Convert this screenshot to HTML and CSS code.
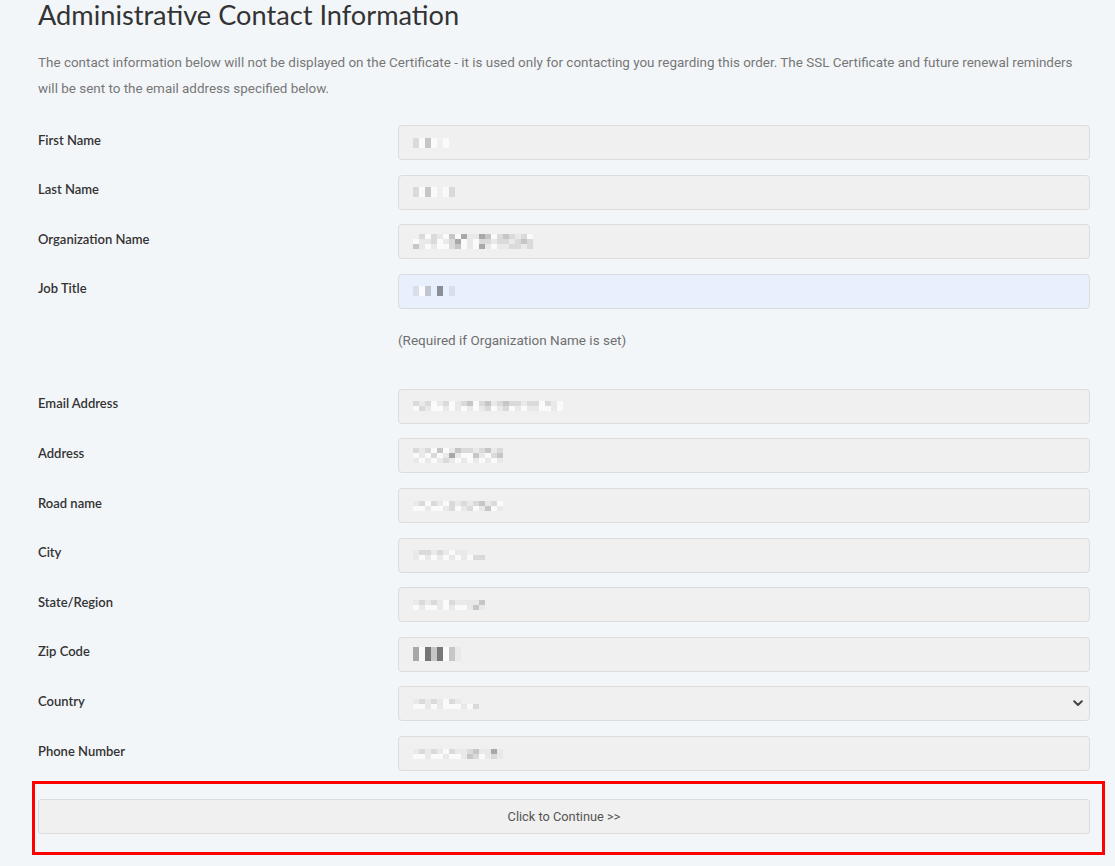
FILE: index.html
```html
<!DOCTYPE html>
<html lang="en">
<head>
<meta charset="utf-8">
<title>Administrative Contact Information</title>
<link rel="stylesheet" href="styles.css">
</head>
<body>
<div class="page">
  <h1 class="title">Administrative Contact Information</h1>
  <p class="intro">The contact information below will not be displayed on the Certificate - it is used only for contacting you regarding this order. The SSL Certificate and future renewal reminders will be sent to the email address specified below.</p>

  <form class="form">
    <div class="row">
      <label class="label">First Name</label>
      <div class="field">
        <div class="input"><span class="pix"><span class="r"><i class="a"></i><i class="w"></i><i class="b"></i><i class="w"></i><i class="n"></i><i class="w"></i></span><span class="r"><i class="a"></i><i class="w"></i><i class="b"></i><i class="w"></i><i class="n"></i><i class="w"></i></span></span></div>
      </div>
    </div>
    <div class="row">
      <label class="label">Last Name</label>
      <div class="field">
        <div class="input"><span class="pix"><span class="r"><i class="a"></i><i class="w"></i><i class="b"></i><i class="w"></i><i class="n"></i><i class="w"></i><i class="a"></i></span><span class="r"><i class="a"></i><i class="w"></i><i class="b"></i><i class="w"></i><i class="n"></i><i class="w"></i><i class="a"></i></span></span></div>
      </div>
    </div>
    <div class="row">
      <label class="label">Organization Name</label>
      <div class="field">
        <div class="input"><span class="pix"><span class="r"><i class="n"></i><i class="a"></i><i class="w"></i><i class="a"></i><i class="l"></i><i class="w"></i><i class="b"></i><i class="w"></i><i class="c"></i><i class="l"></i><i class="l"></i><i class="c"></i><i class="b"></i><i class="w"></i><i class="a"></i><i class="b"></i><i class="a"></i><i class="l"></i><i class="a"></i><i class="w"></i></span><span class="r"><i class="w"></i><i class="l"></i><i class="l"></i><i class="a"></i><i class="w"></i><i class="l"></i><i class="a"></i><i class="c"></i><i class="w"></i><i class="l"></i><i class="w"></i><i class="a"></i><i class="a"></i><i class="l"></i><i class="a"></i><i class="a"></i><i class="l"></i><i class="a"></i><i class="b"></i><i class="a"></i></span><span class="r"><i class="b"></i><i class="l"></i><i class="w"></i><i class="l"></i><i class="w"></i><i class="w"></i><i class="a"></i><i class="b"></i><i class="w"></i><i class="l"></i><i class="w"></i><i class="c"></i><i class="l"></i><i class="w"></i><i class="l"></i><i class="l"></i><i class="a"></i><i class="a"></i><i class="l"></i><i class="a"></i></span></span></div>
      </div>
    </div>
    <div class="row">
      <label class="label">Job Title</label>
      <div class="field">
        <div class="input autofill"><span class="pix"><span class="r"><i class="ba"></i><i class="w"></i><i class="bb"></i><i class="n"></i><i class="bc"></i><i class="n"></i><i class="ba"></i></span><span class="r"><i class="ba"></i><i class="w"></i><i class="bb"></i><i class="n"></i><i class="bc"></i><i class="n"></i><i class="ba"></i></span></span></div>
        <p class="help">(Required if Organization Name is set)</p>
      </div>
    </div>
    <div class="row">
      <label class="label">Email Address</label>
      <div class="field">
        <div class="input"><span class="pix"><span class="r"><i class="a"></i><i class="l"></i><i class="a"></i><i class="w"></i><i class="l"></i><i class="a"></i><i class="w"></i><i class="l"></i><i class="a"></i><i class="b"></i><i class="w"></i><i class="a"></i><i class="b"></i><i class="l"></i><i class="a"></i><i class="b"></i><i class="a"></i><i class="a"></i><i class="l"></i><i class="a"></i><i class="a"></i><i class="w"></i><i class="a"></i><i class="l"></i><i class="w"></i></span><span class="r"><i class="w"></i><i class="a"></i><i class="l"></i><i class="w"></i><i class="w"></i><i class="l"></i><i class="w"></i><i class="l"></i><i class="w"></i><i class="l"></i><i class="w"></i><i class="l"></i><i class="a"></i><i class="w"></i><i class="l"></i><i class="a"></i><i class="w"></i><i class="l"></i><i class="w"></i><i class="l"></i><i class="l"></i><i class="w"></i><i class="w"></i><i class="l"></i><i class="w"></i></span></span></div>
      </div>
    </div>
    <div class="row">
      <label class="label">Address</label>
      <div class="field">
        <div class="input"><span class="pix"><span class="r"><i class="a"></i><i class="l"></i><i class="a"></i><i class="w"></i><i class="b"></i><i class="w"></i><i class="l"></i><i class="b"></i><i class="a"></i><i class="a"></i><i class="l"></i><i class="a"></i><i class="b"></i><i class="l"></i><i class="a"></i></span><span class="r"><i class="w"></i><i class="l"></i><i class="w"></i><i class="a"></i><i class="w"></i><i class="l"></i><i class="c"></i><i class="l"></i><i class="w"></i><i class="w"></i><i class="b"></i><i class="l"></i><i class="w"></i><i class="a"></i><i class="b"></i></span><span class="r"><i class="l"></i><i class="w"></i><i class="l"></i><i class="w"></i><i class="l"></i><i class="a"></i><i class="l"></i><i class="w"></i><i class="l"></i><i class="w"></i><i class="l"></i><i class="w"></i><i class="l"></i><i class="w"></i><i class="l"></i></span></span></div>
      </div>
    </div>
    <div class="row">
      <label class="label">Road name</label>
      <div class="field">
        <div class="input"><span class="pix"><span class="r"><i class="l"></i><i class="a"></i><i class="w"></i><i class="a"></i><i class="l"></i><i class="w"></i><i class="a"></i><i class="l"></i><i class="a"></i><i class="l"></i><i class="a"></i><i class="b"></i><i class="l"></i><i class="a"></i><i class="w"></i></span><span class="r"><i class="w"></i><i class="w"></i><i class="l"></i><i class="w"></i><i class="w"></i><i class="l"></i><i class="a"></i><i class="w"></i><i class="l"></i><i class="a"></i><i class="w"></i><i class="l"></i><i class="b"></i><i class="w"></i><i class="l"></i></span></span></div>
      </div>
    </div>
    <div class="row">
      <label class="label">City</label>
      <div class="field">
        <div class="input"><span class="pix"><span class="r"><i class="l"></i><i class="a"></i><i class="a"></i><i class="l"></i><i class="a"></i><i class="l"></i><i class="w"></i><i class="l"></i><i class="l"></i><i class="n"></i><i class="n"></i><i class="n"></i></span><span class="r"><i class="l"></i><i class="w"></i><i class="l"></i><i class="w"></i><i class="l"></i><i class="w"></i><i class="l"></i><i class="w"></i><i class="l"></i><i class="w"></i><i class="a"></i><i class="a"></i></span></span></div>
      </div>
    </div>
    <div class="row">
      <label class="label">State/Region</label>
      <div class="field">
        <div class="input"><span class="pix"><span class="r"><i class="l"></i><i class="a"></i><i class="l"></i><i class="a"></i><i class="l"></i><i class="w"></i><i class="a"></i><i class="l"></i><i class="l"></i><i class="l"></i><i class="l"></i><i class="b"></i></span><span class="r"><i class="w"></i><i class="l"></i><i class="w"></i><i class="w"></i><i class="l"></i><i class="w"></i><i class="l"></i><i class="w"></i><i class="w"></i><i class="l"></i><i class="b"></i><i class="l"></i></span></span></div>
      </div>
    </div>
    <div class="row">
      <label class="label">Zip Code</label>
      <div class="field">
        <div class="input"><span class="pix tall"><span class="r"><i class="c"></i><i class="w"></i><i class="d"></i><i class="b"></i><i class="d"></i><i class="w"></i><i class="b"></i><i class="l"></i></span><span class="r"><i class="c"></i><i class="w"></i><i class="d"></i><i class="b"></i><i class="d"></i><i class="w"></i><i class="b"></i><i class="l"></i></span></span></div>
      </div>
    </div>
    <div class="row">
      <label class="label">Country</label>
      <div class="field">
        <div class="input select"><span class="pix"><span class="r"><i class="l"></i><i class="a"></i><i class="l"></i><i class="a"></i><i class="l"></i><i class="w"></i><i class="a"></i><i class="l"></i><i class="n"></i><i class="n"></i><i class="n"></i><i class="n"></i></span><span class="r"><i class="w"></i><i class="w"></i><i class="l"></i><i class="w"></i><i class="l"></i><i class="w"></i><i class="w"></i><i class="w"></i><i class="l"></i><i class="w"></i><i class="a"></i><i class="n"></i></span></span>
          <svg class="chev" width="10" height="7" viewBox="0 0 10 7" aria-hidden="true"><path d="M1.2 1.3 L5 5 L8.8 1.3" fill="none" stroke="#444" stroke-width="2" stroke-linecap="round" stroke-linejoin="round"/></svg>
        </div>
      </div>
    </div>
    <div class="row">
      <label class="label">Phone Number</label>
      <div class="field">
        <div class="input"><span class="pix"><span class="r"><i class="l"></i><i class="a"></i><i class="l"></i><i class="a"></i><i class="l"></i><i class="w"></i><i class="a"></i><i class="l"></i><i class="l"></i><i class="a"></i><i class="b"></i><i class="l"></i><i class="l"></i><i class="c"></i><i class="l"></i></span><span class="r"><i class="w"></i><i class="w"></i><i class="l"></i><i class="w"></i><i class="w"></i><i class="l"></i><i class="w"></i><i class="w"></i><i class="l"></i><i class="b"></i><i class="a"></i><i class="w"></i><i class="l"></i><i class="a"></i><i class="l"></i></span></span></div>
      </div>
    </div>

    <div class="highlight">
      <button type="button" class="continue">Click to Continue &gt;&gt;</button>
    </div>
  </form>
</div>
</body>
</html>
```

FILE: styles.css
```css
* { box-sizing: border-box; }

html, body {
  margin: 0;
  padding: 0;
  background: #f3f6f9;
}

.page {
  padding: 0 25px 0 38px;
  font-family: "Roboto", "Liberation Sans", sans-serif;
}

.title {
  margin: 0;
  font-family: "Lato", "Liberation Sans", sans-serif;
  font-weight: 400;
  font-size: 27.2px;
  line-height: 30px;
  color: #333;
}

.intro {
  margin: 20px 0 23px;
  font-size: 13.45px;
  line-height: 26px;
  color: #777;
}

.form { margin: 0; }

.row {
  display: grid;
  grid-template-columns: 360px 1fr;
  margin-bottom: 14.6px;
}

.label {
  font-family: "Lato", "Liberation Sans", sans-serif;
  font-weight: 600;
  font-size: 13px;
  line-height: 20px;
  padding-top: 4.5px;
  color: #333;
}

.field { min-width: 0; }

.input {
  height: 35px;
  background: #f0f0f0;
  border: 1px solid #dcdcdc;
  border-radius: 4px;
  padding: 0 14px;
  display: flex;
  align-items: center;
  justify-content: space-between;
}

.input.autofill {
  background: #e8f0fe;
}

.input.select { padding-right: 6px; }

.chev { display: block; }

.help {
  margin: 20px 0 23.5px;
  font-size: 13.5px;
  line-height: 22px;
  color: #6f6f6f;
}

/* pixelated (redacted) values */
.pix {
  display: flex;
  flex-direction: column;
}
.pix .r { display: flex; }
.pix i {
  display: block;
  width: 6px;
  height: 5px;
}
.pix.tall i { height: 7px; }
.pix i.n { background: transparent; }
.pix i.w { background: #fafafa; }
.pix i.l { background: #e9e9e9; }
.pix i.a { background: #dadada; }
.pix i.b { background: #c6c6c6; }
.pix i.c { background: #a8a8a8; }
.pix i.d { background: #777; }
.pix i.ba { background: #d8deea; }
.pix i.bb { background: #bfc6d2; }
.pix i.bc { background: #8a8e96; }

.highlight {
  margin: -4.6px -15px 0 -6px;
  border: 3px solid #ff0000;
  padding: 15px 12px 18px 3px;
}

.continue {
  display: block;
  width: 100%;
  height: 35px;
  background: #f0f0f0;
  border: 1px solid #dcdcdc;
  border-radius: 3px;
  font-family: "Roboto", "Liberation Sans", sans-serif;
  font-size: 12.8px;
  color: #555;
  cursor: pointer;
}
```
